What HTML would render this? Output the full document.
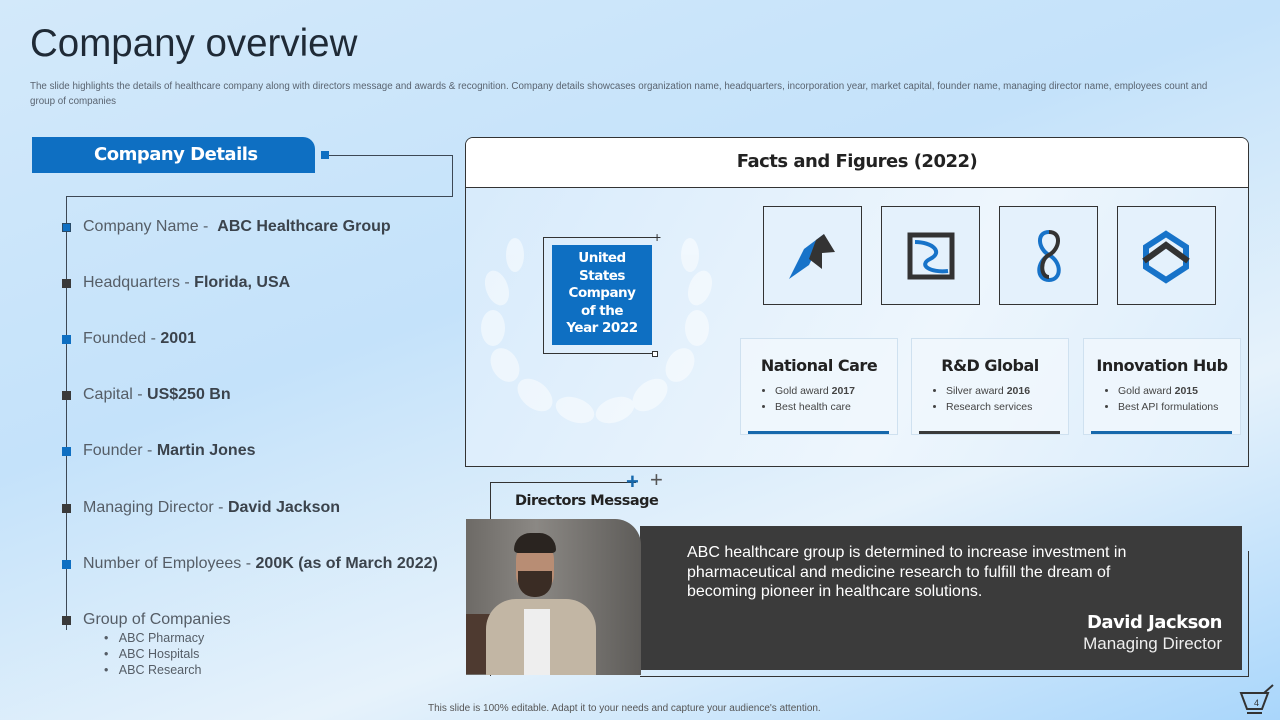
<!DOCTYPE html>
<html><head><meta charset="utf-8"><style>
*{margin:0;padding:0;box-sizing:border-box}
body{width:1280px;height:720px;overflow:hidden;position:relative;font-family:"Liberation Sans",sans-serif;background:linear-gradient(160deg,#d3e9fa 0%,#c4e2fa 40%,#e6f2fb 70%,#a9d6fb 100%)}
.a{position:absolute}
h1{position:absolute;left:30px;top:22px;font-weight:400;font-size:38.5px;color:#1f2a36}
.sub{left:30px;top:79px;width:1180px;font-size:9.8px;line-height:15px;color:#5a6470}
.item{left:83px;font-size:16px;color:#555d66}
.item b{color:#3b434c}
.mk{left:62px;width:9px;height:9px}
.ib{width:99px;height:99px;border:1px solid #333;background:#e4f1fc}
.card{width:158px;height:97px;background:rgba(240,247,253,.85);border:1px solid #cfe1f0;text-align:center}
.card h3{font-family:"DejaVu Sans",sans-serif;font-size:16px;font-weight:600;color:#222;margin-top:17px;letter-spacing:-.5px}
.card ul{text-align:left;font-size:10.5px;color:#444;margin:8px 0 0 34px;line-height:16px}
.bar{position:absolute;left:7px;right:8px;bottom:0;height:3px}
</style></head><body>
<h1>Company overview</h1>
<div class="a sub">The slide highlights the details of healthcare company along with directors message and awards &amp; recognition. Company details showcases organization name, headquarters, incorporation year, market capital, founder name, managing director name, employees count and group of companies</div>

<div class="a" style="left:32px;top:137px;width:283px;height:36px;background:#0e6fc2;border-top-right-radius:12px;color:#fff;font-family:'DejaVu Sans',sans-serif;font-weight:700;font-size:18px;line-height:36px;padding-left:62px;letter-spacing:-.5px">Company Details</div>
<div class="a" style="left:321px;top:151px;width:8px;height:8px;background:#0e6fc2"></div>
<div class="a" style="left:329px;top:155px;width:124px;height:42px;border-top:1px solid #3d4854;border-right:1px solid #3d4854;border-bottom:1px solid #3d4854"></div>
<div class="a" style="left:66px;top:196px;width:1px;height:434px;background:#3d4854"></div>
<div class="a" style="left:66px;top:196px;width:387px;height:1px;background:#3d4854"></div>

<div class="a mk" style="top:223px;background:#0e6fc2;border:1px solid #2a4a66"></div>
<div class="a item" style="top:218px">Company Name -&nbsp; <b>ABC Healthcare Group</b></div>
<div class="a mk" style="top:279px;background:#3a3a3a"></div>
<div class="a item" style="top:274px">Headquarters - <b>Florida, USA</b></div>
<div class="a mk" style="top:335px;background:#0e6fc2"></div>
<div class="a item" style="top:330px">Founded - <b>2001</b></div>
<div class="a mk" style="top:391px;background:#3a3a3a"></div>
<div class="a item" style="top:386px">Capital - <b>US$250 Bn</b></div>
<div class="a mk" style="top:447px;background:#0e6fc2"></div>
<div class="a item" style="top:442px">Founder - <b>Martin Jones</b></div>
<div class="a mk" style="top:504px;background:#3a3a3a"></div>
<div class="a item" style="top:499px">Managing Director - <b>David Jackson</b></div>
<div class="a mk" style="top:560px;background:#0e6fc2"></div>
<div class="a item" style="top:555px">Number of Employees - <b>200K (as of March 2022)</b></div>
<div class="a mk" style="top:616px;background:#3a3a3a"></div>
<div class="a item" style="top:611px">Group of Companies</div>
<div class="a" style="left:104px;top:630px;font-size:12.5px;color:#555d66;line-height:16px">•&nbsp;&nbsp;&nbsp;ABC Pharmacy<br>•&nbsp;&nbsp;&nbsp;ABC Hospitals<br>•&nbsp;&nbsp;&nbsp;ABC Research</div>

<div class="a" style="left:465px;top:137px;width:784px;height:330px;border:1px solid #333;border-radius:8px 8px 0 0;background:linear-gradient(120deg,#d6eafb,#eef6fd 60%,#d9ecfb)"></div>
<div class="a" style="left:466px;top:138px;width:782px;height:50px;background:#fff;border-bottom:1px solid #333;border-radius:7px 7px 0 0;text-align:center;font-family:'DejaVu Sans',sans-serif;font-weight:600;font-size:18px;line-height:48px;color:#222;letter-spacing:-.5px">Facts and Figures (2022)</div>

<svg class="a" style="left:475px;top:230px" width="240" height="200"><g fill="#fff" opacity=".5">
<ellipse cx="40" cy="25" rx="9" ry="17"/><ellipse cx="22" cy="58" rx="11" ry="18" transform="rotate(-20 22 58)"/><ellipse cx="18" cy="98" rx="12" ry="18"/><ellipse cx="30" cy="135" rx="13" ry="18" transform="rotate(-30 30 135)"/><ellipse cx="60" cy="165" rx="13" ry="20" transform="rotate(-50 60 165)"/><ellipse cx="100" cy="180" rx="12" ry="20" transform="rotate(-70 100 180)"/>
<ellipse cx="215" cy="25" rx="9" ry="17"/><ellipse cx="225" cy="58" rx="11" ry="18" transform="rotate(20 225 58)"/><ellipse cx="222" cy="98" rx="12" ry="18"/><ellipse cx="205" cy="135" rx="13" ry="18" transform="rotate(30 205 135)"/><ellipse cx="175" cy="165" rx="13" ry="20" transform="rotate(50 175 165)"/><ellipse cx="140" cy="180" rx="12" ry="20" transform="rotate(70 140 180)"/></g></svg>
<div class="a" style="left:543px;top:237px;width:114px;height:117px;border-top:1px solid #333;border-left:1px solid #333;border-bottom:1px solid #333"></div>
<div class="a" style="left:652px;top:351px;width:6px;height:6px;border:1px solid #333;background:#fff"></div>
<div class="a" style="left:653px;top:231px;font-size:14px;color:#333;line-height:12px">+</div>
<div class="a" style="left:552px;top:245px;width:100px;height:100px;background:#0e6fc2;color:#fff;text-align:center;font-family:'DejaVu Sans',sans-serif;font-weight:700;font-size:13.5px;line-height:17.5px;padding:5px 12px 0;letter-spacing:-.5px">United States Company of the Year 2022</div>

<div class="a ib" style="left:763px;top:206px"><svg width="97" height="97"><path d="M60 27 L45 58 L25 72 L40 42 Z" fill="#1773c9"/><path d="M52 33 L60 27 L71 45 L58 46 L58 62 L45 52 Z" fill="#333"/></svg></div>
<div class="a ib" style="left:881px;top:206px"><svg width="97" height="97"><path d="M28 28 H70 V70 H28 Z" fill="none" stroke="#333" stroke-width="5"/><path d="M33 35 C50 35 62 45 48 52 C36 58 48 66 66 64" fill="none" stroke="#1773c9" stroke-width="4"/></svg></div>
<div class="a ib" style="left:999px;top:206px"><svg width="97" height="97"><path d="M49 25 C36 25 38 42 49 48 C62 55 62 73 49 73 C36 73 36 55 49 48" fill="none" stroke="#1773c9" stroke-width="4"/><path d="M49 25 C62 25 60 42 49 48 C40 52 40 70 49 70" fill="none" stroke="#333" stroke-width="4"/></svg></div>
<div class="a ib" style="left:1117px;top:206px"><svg width="97" height="97"><path d="M48 27 L68 40 V60 L48 73 L28 60 V40 Z" fill="none" stroke="#1773c9" stroke-width="6"/><path d="M26 54 L48 38 L70 54" fill="none" stroke="#333" stroke-width="6"/></svg></div>

<div class="a card" style="left:740px;top:338px"><h3>National Care</h3><ul><li>Gold award <b>2017</b></li><li>Best health care</li></ul><div class="bar" style="background:#1668ac"></div></div>
<div class="a card" style="left:911px;top:338px"><h3>R&amp;D Global</h3><ul><li>Silver award <b>2016</b></li><li>Research services</li></ul><div class="bar" style="background:#3a3a3a"></div></div>
<div class="a card" style="left:1083px;top:338px"><h3>Innovation Hub</h3><ul><li>Gold award <b>2015</b></li><li>Best API formulations</li></ul><div class="bar" style="background:#1668ac"></div></div>

<div class="a" style="left:490px;top:482px;width:146px;height:1px;background:#333"></div>
<div class="a" style="left:490px;top:482px;width:1px;height:194px;background:#333"></div>
<div class="a" style="left:626px;top:474px;color:#1668ac;font-size:22px;font-weight:700;line-height:16px">+</div>
<div class="a" style="left:650px;top:472px;color:#555;font-size:22px;line-height:16px">+</div>
<div class="a" style="left:515px;top:493px;font-family:'DejaVu Sans',sans-serif;font-weight:600;font-size:14.5px;color:#222;letter-spacing:-.5px">Directors Message</div>
<div class="a" style="left:640px;top:551px;width:609px;height:126px;border-right:1px solid #333;border-bottom:1px solid #333"></div>
<div class="a" style="left:640px;top:526px;width:602px;height:144px;background:#3b3b3b"></div>
<div class="a" style="left:466px;top:519px;width:175px;height:156px;border-top-right-radius:26px;overflow:hidden;background:linear-gradient(90deg,#6d6a66,#8b8884 40%,#5e5c59)">
<div class="a" style="left:0;top:95px;width:60px;height:60px;background:#4e3a30"></div>
<div class="a" style="left:20px;top:80px;width:110px;height:80px;background:#c2b6a4;border-radius:30px 30px 0 0"></div>
<div class="a" style="left:58px;top:90px;width:26px;height:66px;background:#eee"></div>
<div class="a" style="left:50px;top:22px;width:38px;height:52px;background:#b88d74;border-radius:18px"></div>
<div class="a" style="left:48px;top:14px;width:42px;height:20px;background:#2a2420;border-radius:18px 18px 4px 4px"></div>
<div class="a" style="left:52px;top:52px;width:34px;height:26px;background:#3a2c24;border-radius:0 0 16px 16px"></div>
</div>
<div class="a" style="left:687px;top:543px;font-size:16px;line-height:19.5px;color:#fff;width:470px">ABC healthcare group is determined to increase investment in pharmaceutical and medicine research to fulfill the dream of becoming pioneer in healthcare solutions.</div>
<div class="a" style="right:58px;top:612px;text-align:right;color:#fff"><div style="font-family:'DejaVu Sans',sans-serif;font-weight:700;font-size:18px;letter-spacing:-.5px">David Jackson</div><div style="font-size:17px;color:#eee;margin-top:1px">Managing Director</div></div>

<div class="a" style="left:428px;top:703px;font-size:10px;color:#555">This slide is 100% editable. Adapt it to your needs and capture your audience's attention.</div>
<svg class="a" style="left:1238px;top:683px" width="38" height="34"><path d="M3 10 H30 L24 26 H9 Z" fill="none" stroke="#333" stroke-width="2"/><path d="M9 30 H24" stroke="#333" stroke-width="2"/><path d="M26 10 L35 2" stroke="#333" stroke-width="2"/><text x="16" y="23" font-size="9" fill="#333" font-family="Liberation Sans">4</text></svg>
</body></html>
